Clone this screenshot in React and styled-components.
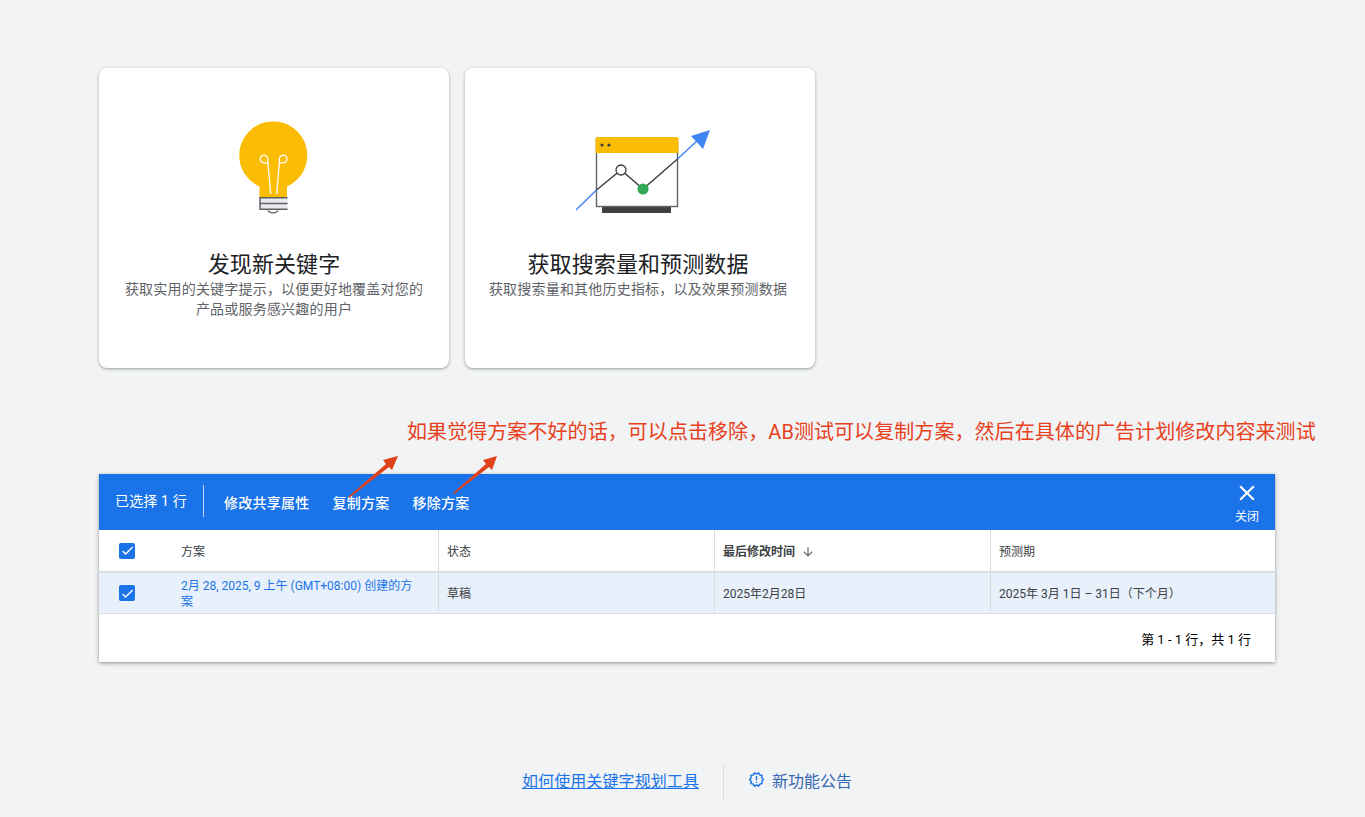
import React from "react"
import styled, { createGlobalStyle } from "styled-components"
import { MdArrowDownward, MdCheck, MdClose, MdOutlineNewReleases } from "react-icons/md"

const GlobalStyle = createGlobalStyle`
  html, body {
    margin: 0;
    background: #f1f3f4;
  }
  * {
    box-sizing: border-box;
  }
`

const Page = styled.div`
  height: 817px;
  padding: 68px 90px 17px 99px;
  overflow: hidden;
  font-family: Roboto, "Noto Sans CJK SC", sans-serif;
  color: #3c4043;
`

const Cards = styled.div`
  display: flex;
  gap: 16px;
`

const Card = styled.div`
  width: 350px;
  height: 300px;
  padding-top: 42px;
  background: #fff;
  border-radius: 8px;
  box-shadow: 0 1px 2px rgba(60, 64, 67, 0.3), 0 1px 3px 1px rgba(60, 64, 67, 0.15);
  text-align: center;
`

const CardIcon = styled.svg`
  display: block;
  width: 160px;
  height: 120px;
  margin: 0 auto 21px;
`

const CardCopy = styled.div`
  padding-right: ${(p) => p.$nudge || 0}px;
`

const CardTitle = styled.div`
  font-size: 22px;
  line-height: 28px;
  letter-spacing: 0.1px;
  color: #202124;
`

const CardText = styled.div`
  width: 302px;
  margin: 0 auto;
  font-size: 14px;
  line-height: 20px;
  letter-spacing: 0.2px;
  color: #5f6368;
`

const Note = styled.div`
  margin: 50px 0 28px 308px;
  font-size: 20px;
  line-height: 28px;
  letter-spacing: 0.07px;
  white-space: nowrap;
  color: #e8401c;
`

const TableWrap = styled.div`
  position: relative;
  width: 1176px;
  background: #fff;
  box-shadow: 0 1px 3px rgba(60, 64, 67, 0.45), 0 2px 6px rgba(60, 64, 67, 0.12);
`

const Pointer = styled.svg`
  position: absolute;
  left: ${(p) => p.$left}px;
  top: -20px;
  width: 54px;
  height: 46px;
`

const Toolbar = styled.div`
  display: flex;
  align-items: center;
  height: 56px;
  padding: 0 15px 0 16px;
  background: #1a73e8;
  color: #fff;
`

const Selected = styled.div`
  width: 89px;
  height: 32px;
  margin-top: -2px;
  border-right: 1px solid rgba(255, 255, 255, 0.7);
  font-size: 14px;
  line-height: 32px;
  letter-spacing: 0.15px;
`

const Actions = styled.div`
  display: flex;
  flex: 1;
  gap: 23px;
  margin-left: 20px;
`

const Action = styled.div`
  font-size: 14px;
  font-weight: 500;
  letter-spacing: 0.25px;
`

const CloseButton = styled.div`
  display: flex;
  flex-direction: column;
  align-items: center;
  gap: 3px;
  font-size: 12px;
  line-height: 16px;
`

const Row = styled.div`
  display: grid;
  grid-template-columns: 340px 276px 276px 1fr;
  height: ${(p) => (p.$head ? 43 : 41)}px;
  background: ${(p) => (p.$head ? "#fff" : "#e8f0fb")};
  border-bottom: ${(p) => (p.$head ? "2px solid #dadce0" : "1px solid #dadce0")};
`

const Cell = styled.div`
  display: flex;
  align-items: center;
  gap: 6px;
  padding: 2px 0 0 8px;
  font-size: 12px;
  line-height: 16px;
  font-weight: ${(p) => (p.$strong ? 700 : 400)};
  border-right: 1px solid #dadce0;

  &:last-child {
    border-right: 0;
  }
`

const NameCell = styled(Cell)`
  gap: 46px;
  padding-left: 20px;
`

const Checkbox = styled.span`
  display: flex;
  flex: none;
  align-items: center;
  justify-content: center;
  width: 16px;
  height: 16px;
  margin-top: -2px;
  border-radius: 2px;
  background: #1a73e8;
  color: #fff;
`

const PlanLink = styled.span`
  width: 236px;
  color: #1a73e8;
`

const SortIcon = styled(MdArrowDownward)`
  color: #5f6368;
`

const Pager = styled.div`
  height: 48px;
  padding-right: 24px;
  font-size: 13px;
  line-height: 51px;
  text-align: right;
  color: #000;
`

const Footer = styled.div`
  display: flex;
  align-items: center;
  justify-content: center;
  width: 1176px;
  height: 36px;
  margin-top: 102px;
  font-size: 16px;
  color: #1a73e8;
`

const HelpLink = styled.a`
  margin-top: -4px;
  letter-spacing: 0.1px;
  color: #1a73e8;
  text-decoration: underline;
`

const Divider = styled.div`
  width: 1px;
  height: 36px;
  margin: 0 24px;
  background: #dadce0;
`

const Announce = styled.div`
  display: flex;
  align-items: center;
  gap: 7px;
  margin-top: -4px;
  color: #3367b5;
`

const AnnounceIcon = styled(MdOutlineNewReleases)`
  margin-top: -2px;
  color: #1a73e8;
`

const BulbIcon = () => (
  <CardIcon viewBox="0 0 160 120">
    <path d="M65.5 88 V76.5 A34 34 0 1 1 93 76.5 V88 Z" fill="#fbbc04" />
    <path d="M76.7 84 L73.7 50 A3.8 3.8 0 1 0 70 52.8 H74 M82.7 84 L85.5 50 A3.8 3.8 0 1 1 88.8 52.8 H85" stroke="#fff" strokeWidth="1.3" fill="none" />
    <rect x="66" y="88" width="27.5" height="12" fill="#e8eaed" />
    <path d="M65.5 87.7 H93.5 M65.5 93.5 H93.5 M65.5 99.3 H93.5 M66 87 V100" stroke="#5f6368" strokeWidth="1.5" fill="none" />
    <path d="M74 100.5 A5.5 4 0 0 0 84 100.5" stroke="#5f6368" strokeWidth="1.4" fill="none" />
  </CardIcon>
)

const ChartIcon = () => (
  <CardIcon viewBox="0 6 160 120">
    <rect x="42" y="103" width="69" height="6" fill="#3c4043" />
    <rect x="36.5" y="34.5" width="81" height="68" fill="#fff" stroke="#5f6368" strokeWidth="1.4" />
    <path d="M35.5 35 Q35.5 33 38 33 H116 Q118.5 33 118.5 35 V49 H35.5 Z" fill="#fbbc04" />
    <circle cx="42" cy="41" r="1.6" fill="#3c4043" />
    <circle cx="49" cy="41" r="1.6" fill="#3c4043" />
    <path d="M16 106 L36.5 86" stroke="#4285f4" strokeWidth="1.5" />
    <path d="M117.5 55 L139 35" stroke="#4285f4" strokeWidth="1.5" />
    <path d="M36.5 86 L61 66 L83 85 L117.5 55" stroke="#3c4043" strokeWidth="1.4" fill="none" />
    <circle cx="61" cy="66" r="5" fill="#fff" stroke="#3c4043" strokeWidth="1.3" />
    <circle cx="83" cy="85" r="5.6" fill="#34a853" />
    <path d="M150 26 L131 32 L143 45 Z" fill="#4285f4" />
  </CardIcon>
)

const Arrow = ({ left, tail }) => (
  <Pointer $left={left} viewBox="0 0 54 46">
    <path d={tail} fill="#e0421a" />
  </Pointer>
)

export default function App() {
  return (
    <Page>
      <GlobalStyle />
      <Cards>
        <Card>
          <BulbIcon />
          <CardCopy>
            <CardTitle>发现新关键字</CardTitle>
            <CardText>获取实用的关键字提示，以便更好地覆盖对您的产品或服务感兴趣的用户</CardText>
          </CardCopy>
        </Card>
        <Card>
          <ChartIcon />
          <CardCopy $nudge={4}>
            <CardTitle>获取搜索量和预测数据</CardTitle>
            <CardText>获取搜索量和其他历史指标，以及效果预测数据</CardText>
          </CardCopy>
        </Card>
      </Cards>

      <Note>如果觉得方案不好的话，可以点击移除，AB测试可以复制方案，然后在具体的广告计划修改内容来测试</Note>

      <TableWrap>
        <Arrow left={249} tail="M0 43 L38 10 L35 6 L50 2 L44 16 L41 13 L1 44 Z" />
        <Arrow left={354} tail="M0 39 L33 10 L30 6 L44 2 L39 16 L36 13 L1 40 Z" />
        <Toolbar>
          <Selected>已选择 1 行</Selected>
          <Actions>
            <Action>修改共享属性</Action>
            <Action>复制方案</Action>
            <Action>移除方案</Action>
          </Actions>
          <CloseButton>
            <MdClose size={26} />
            关闭
          </CloseButton>
        </Toolbar>
        <Row $head>
          <NameCell>
            <Checkbox><MdCheck size={15} /></Checkbox>
            方案
          </NameCell>
          <Cell>状态</Cell>
          <Cell $strong>
            最后修改时间
            <SortIcon size={14} />
          </Cell>
          <Cell>预测期</Cell>
        </Row>
        <Row>
          <NameCell>
            <Checkbox><MdCheck size={15} /></Checkbox>
            <PlanLink>2月 28, 2025, 9 上午 (GMT+08:00) 创建的方案</PlanLink>
          </NameCell>
          <Cell>草稿</Cell>
          <Cell>2025年2月28日</Cell>
          <Cell>2025年 3月 1日 – 31日（下个月）</Cell>
        </Row>
        <Pager>第 1 - 1 行，共 1 行</Pager>
      </TableWrap>

      <Footer>
        <HelpLink>如何使用关键字规划工具</HelpLink>
        <Divider />
        <Announce>
          <AnnounceIcon size={17} />
          新功能公告
        </Announce>
      </Footer>
    </Page>
  )
}
